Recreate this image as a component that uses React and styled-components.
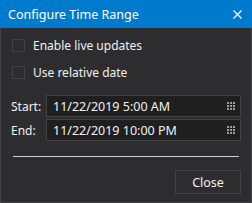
import React from "react";
import styled, { createGlobalStyle } from "styled-components";

const Global = createGlobalStyle`
  html, body { margin: 0; padding: 0; background: #2d2d30; }
  body { font-family: "Noto Sans", "Open Sans", sans-serif; }
`;

const Dialog = styled.div`
  width: 252px;
  height: 203px;
  box-sizing: border-box;
  display: flex;
  flex-direction: column;
  background: #2d2d30;
  color: #f1f1f1;
  font-size: 12px;
`;

const TitleBar = styled.div`
  height: 28px;
  flex: none;
  background: #007acc;
  display: flex;
  align-items: center;
  justify-content: space-between;
  padding: 0 10px 0 8px;
  color: #ffffff;
  font-size: 12.5px;
`;

const Body = styled.div`
  flex: 1;
  border: 1px solid #434346;
  border-top: none;
  display: flex;
  flex-direction: column;
  padding: 4px 10px 8px 10px;
`;

const CheckRow = styled.label`
  display: flex;
  align-items: center;
  gap: 8px;
  height: 27px;
  padding-left: 1px;
`;

const Box = styled.span`
  width: 11px;
  height: 11px;
  border: 1px solid #434346;
  background: #2d2d30;
  flex: none;
`;

const Fields = styled.div`
  display: grid;
  grid-template-columns: 35px 1fr;
  row-gap: 2px;
  align-items: center;
  margin-top: 9px;
`;

const FieldLabel = styled.span`
  padding-left: 0px;
`;

const Input = styled.div`
  height: 22px;
  box-sizing: border-box;
  border: 1px solid #434346;
  background: #1f1f20;
  display: flex;
  align-items: center;
  justify-content: space-between;
  padding: 0 5px 0 6px;
  font-size: 12.5px;
`;

const Dots = styled.span`
  display: grid;
  grid-template-columns: repeat(3, 2px);
  grid-auto-rows: 2px;
  gap: 1px;
  & > i { background: #9d9d9d; }
`;

const Separator = styled.div`
  height: 1px;
  background: #d0d0d0;
  margin: 15px 2px 0 2px;
`;

const Footer = styled.div`
  display: flex;
  justify-content: flex-end;
  margin-top: 13px;
`;

const Button = styled.button`
  width: 66px;
  height: 24px;
  background: #2d2d30;
  border: 1px solid #434346;
  color: #f1f1f1;
  font-family: inherit;
  font-size: 12.5px;
  padding: 0;
`;

const DotsIcon = () => (
  <Dots>
    {Array.from({ length: 9 }).map((_, i) => (
      <i key={i} />
    ))}
  </Dots>
);

export default function App() {
  return (
    <>
      <Global />
      <Dialog>
        <TitleBar>
          <span>Configure Time Range</span>
          <svg width="9" height="9" viewBox="0 0 9 9">
            <path d="M0.5 0.5L8.5 8.5M8.5 0.5L0.5 8.5" stroke="#fff" strokeWidth="1.3" />
          </svg>
        </TitleBar>
        <Body>
          <CheckRow>
            <Box />
            <span>Enable live updates</span>
          </CheckRow>
          <CheckRow>
            <Box />
            <span>Use relative date</span>
          </CheckRow>
          <Fields>
            <FieldLabel>Start:</FieldLabel>
            <Input>
              <span>11/22/2019 5:00 AM</span>
              <DotsIcon />
            </Input>
            <FieldLabel>End:</FieldLabel>
            <Input>
              <span>11/22/2019 10:00 PM</span>
              <DotsIcon />
            </Input>
          </Fields>
          <Separator />
          <Footer>
            <Button>Close</Button>
          </Footer>
        </Body>
      </Dialog>
    </>
  );
}
